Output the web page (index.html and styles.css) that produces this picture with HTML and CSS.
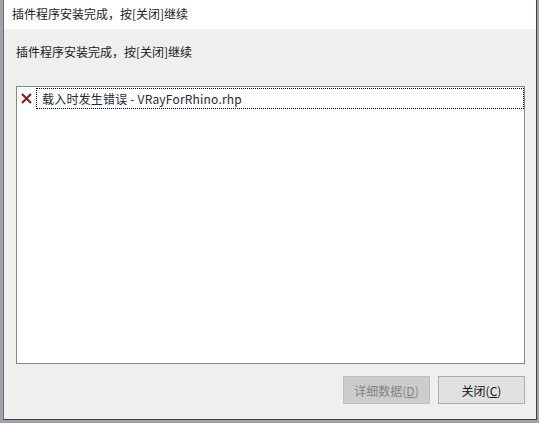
FILE: index.html
```html
<!DOCTYPE html>
<html lang="zh-CN">
<head>
<meta charset="utf-8">
<link rel="stylesheet" href="styles.css">
</head>
<body>
<div class="dialog">
  <div class="titlebar">插件程序安装完成，按[关闭]继续</div>
  <div class="content">
    <div class="message">插件程序安装完成，按[关闭]继续</div>
    <div class="listbox">
      <div class="item">
        <svg class="err" width="11" height="11" viewBox="0 0 11 11"><path d="M1 1L10 10M10 1L1 10" stroke="#8b1a1a" stroke-width="2" fill="none"/></svg>
        <span class="label">载入时发生错误 - VRayForRhino.rhp</span>
      </div>
    </div>
    <div class="buttons">
      <button class="btn disabled">详细数据(<u>D</u>)</button>
      <button class="btn">关闭(<u>C</u>)</button>
    </div>
  </div>
</div>
</body>
</html>
```
FILE: styles.css
```css
html, body {
  margin: 0;
  padding: 0;
}
body {
  width: 539px;
  height: 423px;
  background: #9ea3aa;
  font-family: "Noto Sans CJK SC", "Noto Sans", sans-serif;
  font-size: 12px;
  color: #1a1a1a;
  overflow: hidden;
}
.dialog {
  margin-left: 3px;
  width: 534px;
  height: 420px;
  border-left: 1px solid #6b6f75;
  border-right: 1px solid #3c3f44;
  border-bottom: 1px solid #3c3f44;
  box-sizing: border-box;
  display: flex;
  flex-direction: column;
  background: #efefef;
}
.titlebar {
  height: 29px;
  background: #ffffff;
  padding-left: 8px;
  line-height: 28px;
  flex: none;
}
.content {
  flex: 1;
  display: flex;
  flex-direction: column;
  padding: 0 11px 0 12px;
}
.message {
  height: 57px;
  line-height: 46px;
  flex: none;
}
.listbox {
  height: 278px;
  box-sizing: border-box;
  border: 1px solid #828790;
  background: #ffffff;
  padding: 1px 0 0 4px;
  flex: none;
}
.item {
  display: flex;
  align-items: center;
  height: 21px;
}
.err {
  flex: none;
  margin-right: 4px;
}
.label {
  flex: 1;
  height: 21px;
  line-height: 19px;
  box-sizing: border-box;
  border: 1px dotted #000;
  padding-left: 5px;
  color: #1e2a3a;
  letter-spacing: 0.2px;
}
.buttons {
  display: flex;
  justify-content: flex-end;
  gap: 8px;
  margin-top: 12px;
}
.btn {
  width: 87px;
  height: 28px;
  font-family: inherit;
  font-size: 12px;
  color: #111;
  background: #e1e1e1;
  border: 1px solid #adadad;
  padding: 0;
  margin: 0;
}
.btn.disabled {
  background: #cccccc;
  border-color: #bfbfbf;
  color: #838383;
}
```
